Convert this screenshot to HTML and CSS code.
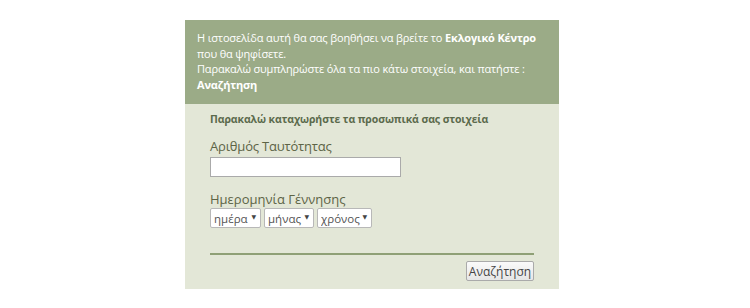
FILE: index.html
```html
<!DOCTYPE html>
<html lang="el">
<head>
    <meta charset="UTF-8">
    <title>Εκλογικό Κέντρο</title>
    <link rel="stylesheet" href="styles.css">
</head>
<body>
    <div class="panel">
        <div class="intro">
            Η ιστοσελίδα αυτή θα σας βοηθήσει να βρείτε το <b>Εκλογικό Κέντρο</b> που θα ψηφίσετε.<br>
            Παρακαλώ συμπληρώστε όλα τα πιο κάτω στοιχεία, και πατήστε : <b>Αναζήτηση</b>
        </div>
        <form class="form">
            <h2>Παρακαλώ καταχωρήστε τα προσωπικά σας στοιχεία</h2>
            <label class="field-label" for="id-number">Αριθμός Ταυτότητας</label>
            <input type="text" id="id-number" class="text-input">
            <label class="field-label date-label">Ημερομηνία Γέννησης</label>
            <div class="date-row">
                <span class="select-wrap day"><select><option>ημέρα</option></select></span>
                <span class="select-wrap month"><select><option>μήνας</option></select></span>
                <span class="select-wrap year"><select><option>χρόνος</option></select></span>
            </div>
            <div class="actions">
                <button type="button">Αναζήτηση</button>
            </div>
        </form>
    </div>
</body>
</html>
```

FILE: styles.css
```css
body {
    margin: 0;
    padding: 20px 0 0;
    background-color: #fff;
    font-family: "Open Sans", "DejaVu Sans", sans-serif;
}
.panel {
    width: 374px;
    margin-left: 185px;
    background-color: #e3e7d7;
}
.intro {
    background-color: #9bab87;
    color: #fff;
    font-size: 11px;
    letter-spacing: -0.15px;
    line-height: 15.5px;
    padding: 10px 8px 11px 12px;
    height: 63px;
}
.intro b {
    font-weight: 700;
}
.form {
    padding: 7px 25px 8px 25px;
}
.form h2 {
    margin: 0;
    font-size: 10.5px;
    letter-spacing: -0.1px;
    font-weight: 700;
    color: #5b6a4c;
    line-height: 16px;
}
.field-label {
    display: block;
    font-size: 13px;
    letter-spacing: -0.2px;
    color: #5d6446;
    line-height: 18px;
    margin-top: 10px;
}
.text-input {
    display: block;
    box-sizing: border-box;
    width: 191px;
    height: 20px;
    margin: 2px 0 0;
    border: 1px solid #aaa;
    background: #fff;
    padding: 0 3px;
}
.date-label {
    margin-top: 13px;
    letter-spacing: 0;
}
.date-row {
    display: flex;
    gap: 3px;
    margin-top: 0;
}
.select-wrap {
    position: relative;
    display: block;
    height: 20px;
}
.select-wrap select {
    display: block;
    appearance: none;
    -webkit-appearance: none;
    box-sizing: border-box;
    height: 20px;
    border: 1px solid #b8b8b8;
    border-radius: 2px;
    background: #fff;
    font-family: inherit;
    font-size: 11.5px;
    color: #555;
    padding: 0 10px 0 3px;
    margin: 0;
}
.select-wrap::after {
    content: "\25BC";
    position: absolute;
    right: 5px;
    top: 6px;
    font-size: 6px;
    line-height: 6px;
    color: #444;
    pointer-events: none;
}
.day select { width: 51px; }
.month select { width: 50px; }
.year select { width: 55px; }
.actions {
    margin-top: 25px;
    border-top: 2px solid #8fa076;
    padding-top: 6px;
    display: flex;
    justify-content: flex-end;
}
.actions button {
    box-sizing: border-box;
    height: 20px;
    width: 68px;
    padding: 0;
    font-family: inherit;
    font-size: 12px;
    color: #444;
    border: 1px solid #aaa;
    border-radius: 2px;
    background: linear-gradient(#fafafa, #e6e6e6);
}
```
